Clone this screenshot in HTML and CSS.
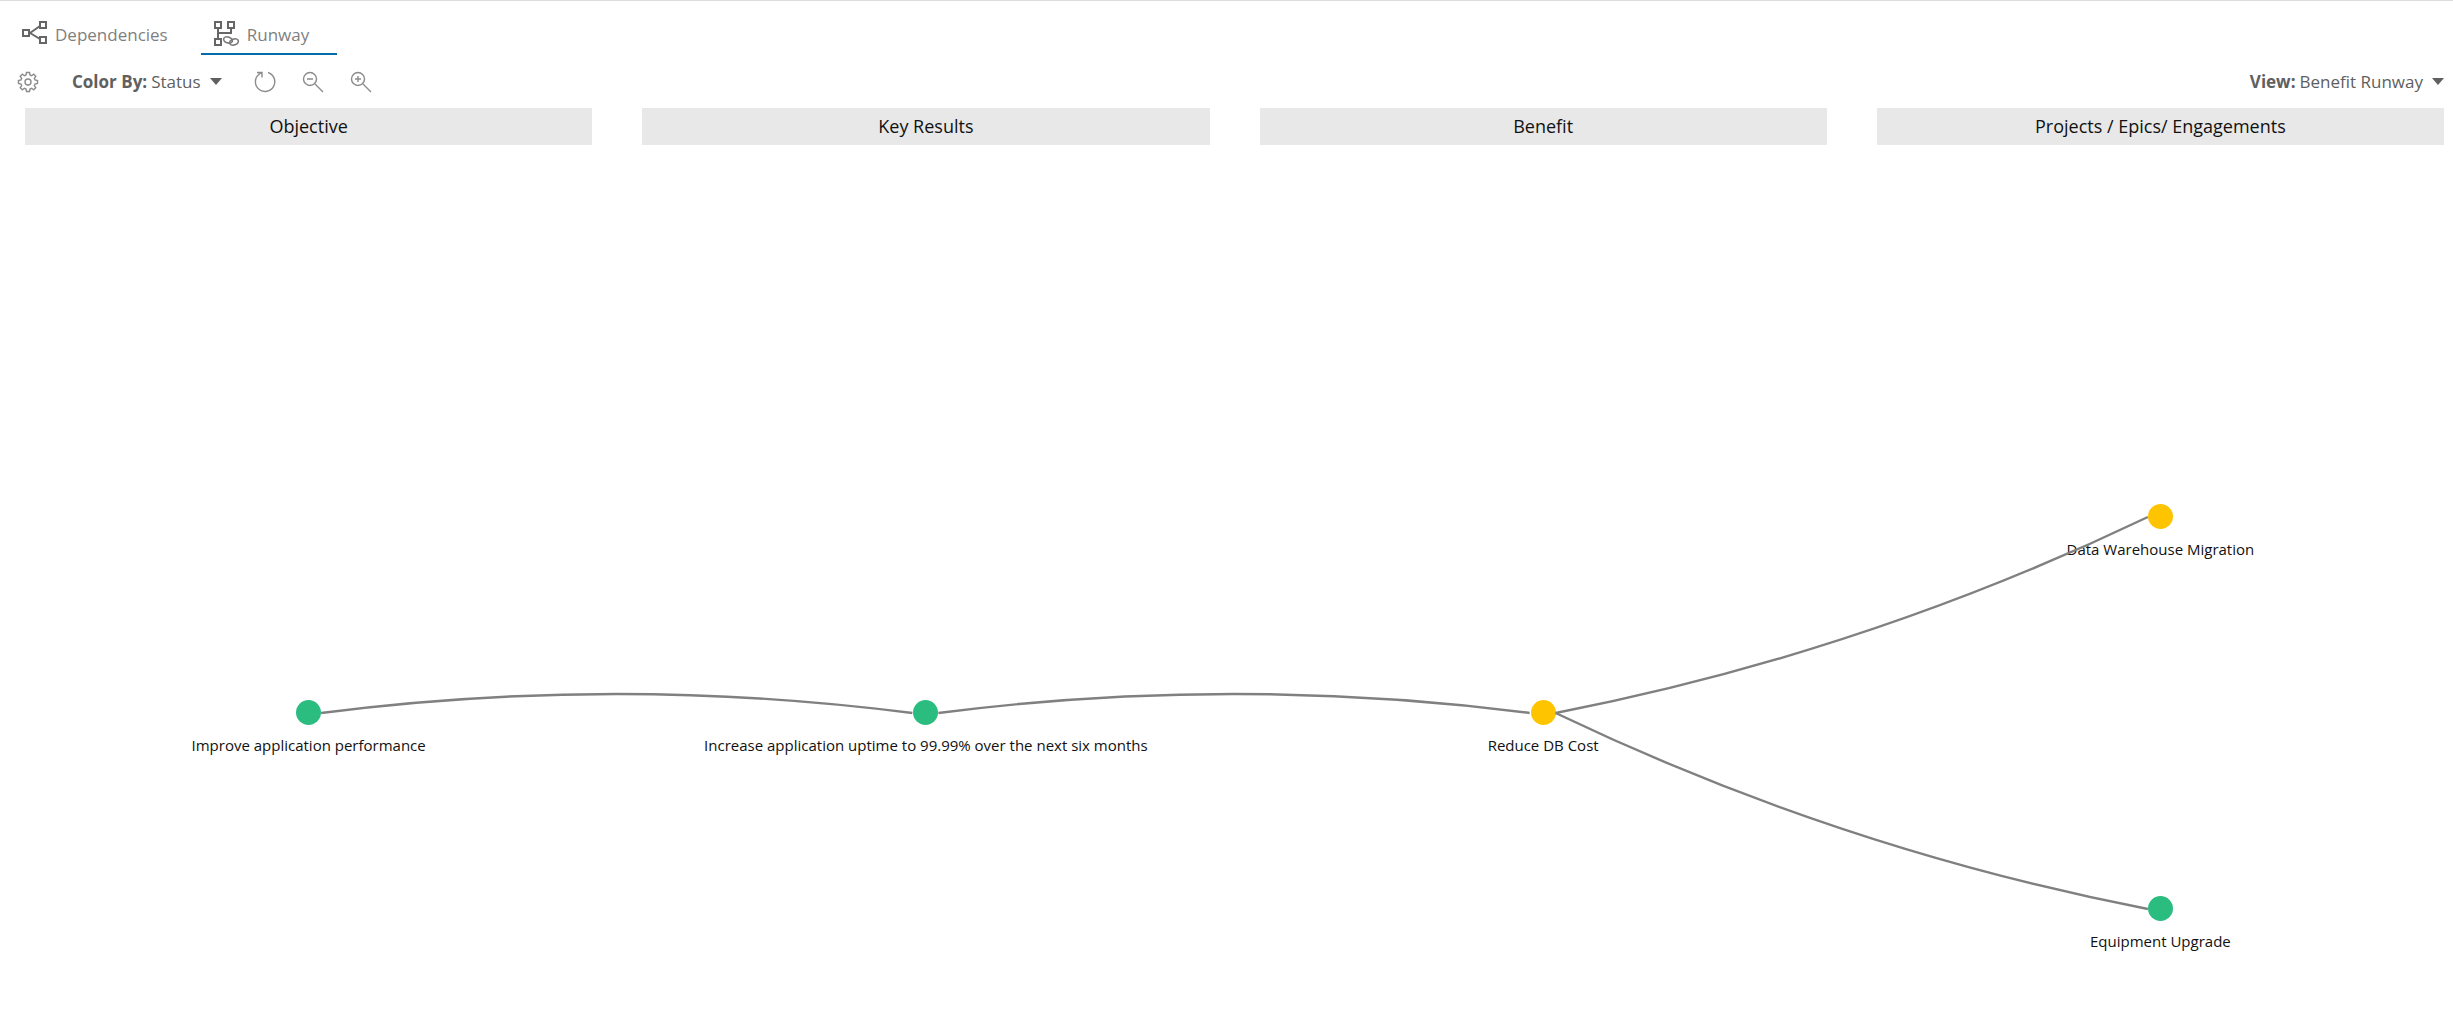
FILE: index.html
```html
<!DOCTYPE html>
<html lang="en">
<head>
    <meta charset="UTF-8">
    <meta name="viewport" content="width=device-width, initial-scale=1.0">
    <title>Benefit Runway</title>
    <link rel="stylesheet" href="styles.css">
</head>
<body>
    <nav class="tabs">
        <a class="tab" href="#dependencies">
            <svg class="tab-icon" width="28" height="26" viewBox="0 0 28 26">
                <path class="link" d="M10 12 L20 5 M10 12 L20 18"/>
                <rect class="box" x="3" y="9" width="6" height="6"/>
                <rect class="box" x="20" y="1" width="6" height="6"/>
                <rect class="box" x="20" y="16" width="6" height="6"/>
            </svg>
            Dependencies
        </a>
        <a class="tab active" href="#runway">
            <svg class="tab-icon" width="28" height="26" viewBox="0 0 28 26">
                <path class="link" d="M6 8 V17 M19 8 V12 M6 12 H20"/>
                <rect class="box" x="3" y="1" width="6" height="6"/>
                <rect class="box" x="16" y="1" width="6" height="6"/>
                <rect class="box" x="3" y="18" width="6" height="6"/>
                <ellipse class="chain" cx="16" cy="19" rx="4.500" ry="3" transform="rotate(20 16 19)"/>
                <ellipse class="chain" cx="22" cy="21" rx="4.500" ry="3" transform="rotate(-20 22 21)"/>
            </svg>
            Runway
        </a>
    </nav>

    <div class="toolbar">
        <button class="icon-button settings" aria-label="Settings">
            <svg width="22" height="22" viewBox="0 0 22 22">
                <path d="M9.5 1.5 H12.5 L13 4 L14.6 4.700 L16.700 3.200 L18.800 5.300 L17.300 7.400 L18 9 L20.500 9.500 V12.500 L18 13 L17.300 14.600 L18.800 16.700 L16.700 18.800 L14.600 17.300 L13 18 L12.500 20.500 H9.500 L9 18 L7.400 17.300 L5.300 18.800 L3.200 16.700 L4.700 14.600 L4 13 L1.500 12.500 V9.500 L4 9 L4.700 7.400 L3.200 5.300 L5.300 3.200 L7.400 4.700 L9 4 Z"/>
                <circle cx="11" cy="11" r="3"/>
            </svg>
        </button>
        <button class="dropdown">
            <b>Color By:</b> Status
            <svg class="caret" width="12" height="7" viewBox="0 0 12 7"><path d="M0 0 H12 L6 7 Z"/></svg>
        </button>
        <div class="actions">
            <button class="icon-button" aria-label="Refresh">
                <svg width="22" height="22" viewBox="0 0 22 22">
                    <path d="M14 1.500 A9.700 9.700 0 1 1 5 3.200 L8 1.500 M3 1.500 H8 V6.500"/>
                </svg>
            </button>
            <button class="icon-button" aria-label="Zoom out">
                <svg width="22" height="22" viewBox="0 0 22 22">
                    <circle cx="8" cy="8" r="6.500"/>
                    <path d="M13 13 L21 21 M5 8 H11"/>
                </svg>
            </button>
            <button class="icon-button" aria-label="Zoom in">
                <svg width="22" height="22" viewBox="0 0 22 22">
                    <circle cx="8" cy="8" r="6.500"/>
                    <path d="M13 13 L21 21 M5 8 H11 M8 5 V11"/>
                </svg>
            </button>
        </div>
        <button class="dropdown view">
            <b>View:</b> Benefit Runway
            <svg class="caret" width="12" height="7" viewBox="0 0 12 7"><path d="M0 0 H12 L6 7 Z"/></svg>
        </button>
    </div>

    <main class="runway">
        <div class="columns">
            <div class="column-title">Objective</div>
            <div class="column-title">Key Results</div>
            <div class="column-title">Benefit</div>
            <div class="column-title">Projects / Epics/ Engagements</div>
        </div>

        <div class="columns map">
            <div class="lane">
                <div class="node"><span class="dot green"></span>Improve application performance</div>
            </div>
            <div class="lane">
                <div class="node"><span class="dot green"></span>Increase application uptime to 99.99% over the next six months</div>
            </div>
            <div class="lane">
                <div class="node"><span class="dot yellow"></span>Reduce DB Cost</div>
            </div>
            <div class="lane">
                <div class="node"><span class="dot yellow"></span>Data Warehouse Migration</div>
                <div class="node"><span class="dot green"></span>Equipment Upgrade</div>
            </div>
            <!-- x stretches with the lanes, y stays in pixels -->
            <svg class="links" viewBox="0 0 2418 452" preserveAspectRatio="none">
                <path d="M296 209 Q591 171 887 209"/>
                <path d="M913 209 Q1208 171 1504 209"/>
                <path d="M1530 209 Q1838 149 2122 13"/>
                <path d="M1530 209 Q1814 345 2122 405"/>
            </svg>
        </div>
    </main>
</body>
</html>
```

FILE: styles.css
```css
body {
    font-family: "Segoe UI", "Open Sans", "Noto Sans", sans-serif;
    font-size: 17px;
    color: #666;
    background-color: #fff;
    margin: 0;
    border-top: 1px solid #dcdce0;
}

button {
    font: inherit;
    color: inherit;
    background: none;
    border: none;
    padding: 0;
    cursor: pointer;
}

.tabs {
    display: flex;
    gap: 16px;
    padding: 14px 20px 0;
    height: 40px;
}

.tab {
    display: flex;
    align-items: center;
    gap: 7px;
    padding: 0 17px 0 0;
    color: #7f7f7f;
    text-decoration: none;
    border-bottom: 2px solid transparent;
}

.tab.active {
    padding: 0 28px 0 11px;
    border-bottom-color: #006ca8;
}

.tab-icon,
.icon-button svg {
    display: block;
    fill: none;
}

.tab-icon .box,
.tab-icon .link {
    stroke: #666;
    stroke-width: 2;
}

.tab-icon .chain {
    stroke: #777;
    stroke-width: 1.6;
}

.icon-button svg {
    stroke: #8c8c8c;
    stroke-width: 1.4;
}

.toolbar {
    display: flex;
    align-items: center;
    height: 53px;
    padding: 0 9px 0 17px;
}

.dropdown {
    display: flex;
    align-items: center;
    gap: 4px;
    color: #606060;
}

.settings {
    margin-right: 33px;
}

.caret {
    margin-left: 5px;
    fill: #606060;
}

.actions {
    display: flex;
    gap: 26px;
    margin-left: 32px;
}

.view {
    margin-left: auto;
}

.runway {
    padding: 0 9px 24px 25px;
    color: #111;
}

.columns {
    display: grid;
    grid-template-columns: repeat(4, 1fr);
    column-gap: 50px;
}

.column-title {
    background-color: #e8e8e8;
    font-size: 18px;
    line-height: 36px;
    padding-bottom: 1px;
    text-align: center;
}

.map {
    position: relative;
    margin-top: 359px;
    font-size: 15px;
}

.lane {
    display: flex;
    flex-direction: column;
    justify-content: center;
    align-items: center;
    gap: 332px;
}

/* the first lanes line up with the middle of the last one */
.node {
    display: flex;
    flex-direction: column;
    align-items: center;
    gap: 7px;
    height: 60px;
    line-height: 26px;
    white-space: nowrap;
}

.dot {
    width: 25px;
    height: 25px;
    border-radius: 50%;
    flex-shrink: 0;
}

.green {
    background-color: #2bbc80;
}

.yellow {
    background-color: #ffc400;
}

.links {
    position: absolute;
    top: 0;
    left: 0;
    width: 100%;
    height: 452px;
    fill: none;
    stroke: #808080;
    stroke-width: 2.4;
    pointer-events: none;
}

.links path {
    vector-effect: non-scaling-stroke;
}
```
